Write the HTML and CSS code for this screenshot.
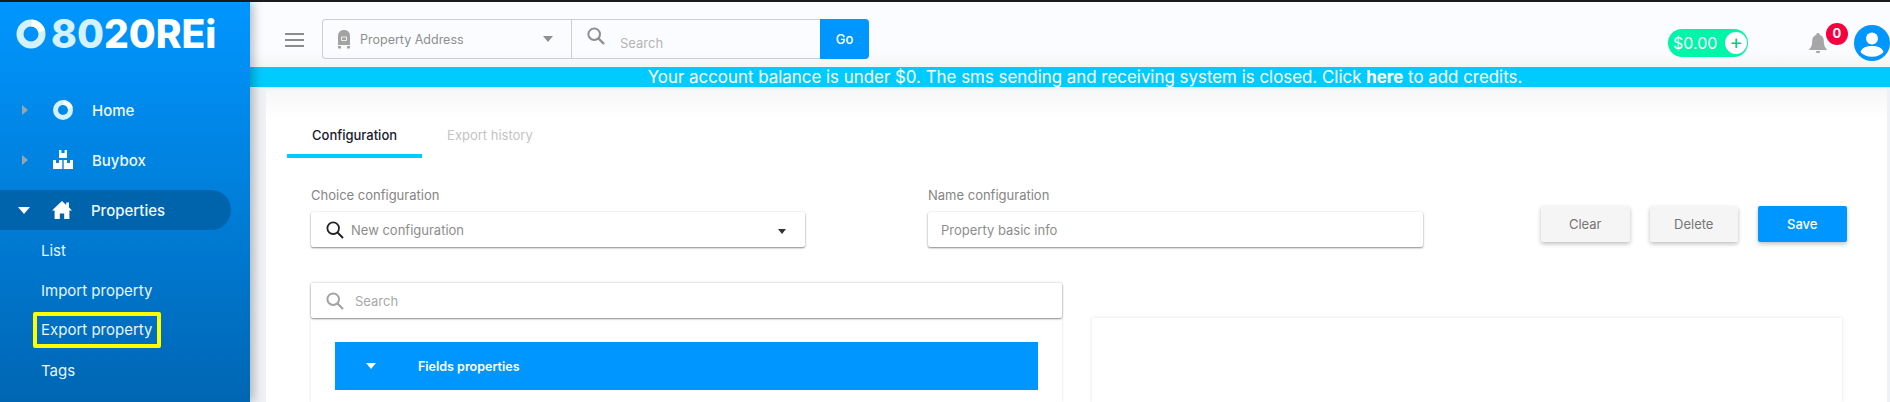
FILE: index.html
```html
<!DOCTYPE html>
<html lang="en">
<head>
    <meta charset="UTF-8">
    <meta name="viewport" content="width=device-width, initial-scale=1.0">
    <title>Export property</title>
    <link rel="stylesheet" href="styles.css">
</head>
<body>
<div class="app">
    <aside class="sidebar">
        <div class="logo">
            <svg class="logo-ring" viewBox="0 0 30 30">
                <circle cx="15" cy="15" r="11" fill="none" stroke="#d4f1ff" stroke-width="7"/>
                <path d="M15.6 4A11 11 0 0 1 25.8 12.6" fill="none" stroke="#fff" stroke-width="7"/>
            </svg>
            <span class="logo-text"><span class="logo-light">80</span>20REi</span>
        </div>
        <ul class="nav">
            <li class="nav-item">
                <span class="arrow-right"></span>
                <svg class="nav-icon" viewBox="0 0 20 20">
                    <circle cx="10" cy="10" r="7.5" fill="none" stroke="#d4f1ff" stroke-width="5"/>
                    <path d="M10.4 2.5A7.5 7.5 0 0 1 17.4 8.4" fill="none" stroke="#fff" stroke-width="5"/>
                </svg>
                <span>Home</span>
            </li>
            <li class="nav-item">
                <span class="arrow-right"></span>
                <svg class="nav-icon" viewBox="0 0 20 20">
                    <path fill="#fff" d="M6 0h2.4v3h3.2V0H14v8H6zM0 10h3v3h3v-3h3.3v9H0zM10.7 10H14v3h3v-3h3v9h-9.3z"/>
                </svg>
                <span>Buybox</span>
            </li>
            <li class="nav-item active">
                <span class="arrow-down"></span>
                <svg class="nav-icon" viewBox="0 0 20 20">
                    <path fill="#fff" d="M10 1 0 10.4h2.6V19h5.2v-5.5h4.4V19h5.2v-8.6H20l-3-2.8V2.6h-2.8v2.4z"/>
                </svg>
                <span>Properties</span>
            </li>
            <li class="sub-item">List</li>
            <li class="sub-item">Import property</li>
            <li class="sub-item"><span class="marked">Export property</span></li>
            <li class="sub-item">Tags</li>
        </ul>
    </aside>

    <div class="main">
        <header class="topbar">
            <div class="burger"><span></span><span></span><span></span></div>
            <div class="search-group">
                <div class="address-select">
                    <svg class="mailbox" viewBox="0 0 14 20">
                        <path fill="#a3a3a3" d="M7 1C3 1 1 3.400 1 7v9h12V7c0-3.600-2-6-6-6zM1 17h3v2.500H1zM10 17h3v2.500h-3z"/>
                        <path fill="none" stroke="#eee" stroke-width="1" d="M4.500 8h5v3.500h-5z"/>
                    </svg>
                    <span class="address-text">Property Address</span>
                    <span class="caret-grey"></span>
                </div>
                <div class="address-search">
                    <svg class="search-icon-top" viewBox="0 0 18 18">
                        <circle cx="7.200" cy="7.200" r="5.800" fill="none" stroke="#8f8f8f" stroke-width="2"/>
                        <path d="m11.500 11.500 5.500 5.500" stroke="#8f8f8f" stroke-width="2.400"/>
                    </svg>
                    <span class="address-search-text">Search</span>
                </div>
                <button class="go-btn">Go</button>
            </div>
            <div class="balance">
                <span class="balance-value">$0.00</span>
                <span class="balance-plus">+</span>
            </div>
            <div class="bell-wrap">
                <svg class="bell" viewBox="0 0 18 21">
                    <path fill="#a6a6a6" d="M9 0a1.600 1.600 0 0 0-1.600 1.800C4.600 2.600 3.200 5 3.200 8c0 4.200-1 6.200-3 8.200V17h17.600v-.8c-2-2-3-4-3-8.200 0-3-1.400-5.400-4.200-6.200A1.600 1.600 0 0 0 9 0zM6.800 18a2.200 2.200 0 0 0 4.400 0z"/>
                </svg>
                <span class="badge">0</span>
            </div>
            <svg class="avatar" viewBox="0 0 36 36">
                <circle cx="18" cy="18" r="18" fill="#0096ff"/>
                <circle cx="18" cy="13.500" r="6" fill="#fff"/>
                <path fill="#fff" d="M6.500 27c1.500-4.500 6-6 11.500-6s10 1.500 11.500 6c-2.500 3-6.500 4.800-11.500 4.800S9 30 6.500 27z"/>
            </svg>
        </header>

        <div class="banner">Your account balance is under $0. The sms sending and receiving system is closed. Click <b>here</b> to add credits.</div>

        <div class="content">
            <div class="card">
                <div class="tabs">
                    <div class="tab tab-active">Configuration</div>
                    <div class="tab">Export history</div>
                </div>

                <div class="form-row">
                    <div class="field field-choice">
                        <label class="field-label">Choice configuration</label>
                        <div class="field-box">
                            <svg class="search-icon" viewBox="0 0 18 18">
                                <circle cx="7.200" cy="7.200" r="5.800" fill="none" stroke="#222" stroke-width="1.800"/>
                                <path d="m11.500 11.500 5.500 5.500" stroke="#222" stroke-width="2"/>
                            </svg>
                            <span class="field-value">New configuration</span>
                            <span class="caret-dark"></span>
                        </div>
                    </div>
                    <div class="field field-name">
                        <label class="field-label">Name configuration</label>
                        <div class="field-box name-box">
                            <span class="field-value">Property basic info</span>
                        </div>
                    </div>
                    <div class="actions">
                        <button class="btn btn-grey">Clear</button>
                        <button class="btn btn-grey">Delete</button>
                        <button class="btn btn-blue">Save</button>
                    </div>
                </div>

                <div class="panels">
                    <div class="panel-left">
                        <div class="field-box panel-search">
                            <svg class="search-icon" viewBox="0 0 18 18">
                                <circle cx="7.200" cy="7.200" r="5.800" fill="none" stroke="#a3a3a3" stroke-width="2"/>
                                <path d="m11.500 11.500 5.500 5.500" stroke="#a3a3a3" stroke-width="2.200"/>
                            </svg>
                            <span class="panel-search-text">Search</span>
                        </div>
                        <div class="panel-body">
                            <div class="accordion">
                                <span class="arrow-down small"></span>
                                <span class="accordion-title">Fields properties</span>
                            </div>
                        </div>
                    </div>
                    <div class="panel-right"></div>
                </div>
            </div>
        </div>
    </div>
</div>
</body>
</html>
```

FILE: styles.css
```css
* {
    box-sizing: border-box;
}
html, body {
    height: 100%;
}
body {
    margin: 0;
    overflow: hidden;
    font-family: Inter, "Open Sans", sans-serif;
    background-color: #eef1f5;
}
.app {
    display: flex;
    height: 100vh;
    border-top: 2px solid #1c1c1c;
}

/* sidebar */
.sidebar {
    width: 250px;
    flex-shrink: 0;
    background: linear-gradient(180deg, #0096ff 0%, #0066b3 100%);
    box-shadow: 3px 0 10px rgba(0,0,0,0.28);
    position: relative;
    z-index: 2;
    color: #eef9ff;
}
.logo {
    display: flex;
    align-items: center;
    height: 83px;
    padding: 0 0 20px 16px;
}
.logo-ring {
    width: 30px;
    height: 30px;
    flex-shrink: 0;
}
.logo-text {
    margin-left: 5px;
    font-size: 39px;
    line-height: 1;
    font-weight: 800;
    color: #fff;
}
.logo-light {
    color: #d4f1ff;
}
.nav {
    list-style: none;
    margin: 0;
    padding: 0;
}
.nav-item {
    display: flex;
    align-items: center;
    height: 50px;
    padding-left: 22px;
    font-size: 15px;
    font-weight: 500;
}
.nav-item.active {
    position: relative;
    z-index: 0;
    height: 45px;
    padding-top: 5px;
}
.nav-item.active::before {
    content: "";
    position: absolute;
    left: 0;
    top: 5px;
    width: 231px;
    height: 40px;
    background-color: #0064ad;
    border-radius: 0 20px 20px 0;
    z-index: -1;
}
.nav-icon {
    width: 20px;
    height: 20px;
    margin-right: 19px;
}
.arrow-right {
    width: 0;
    height: 0;
    margin-right: 25px;
    border-left: 6px solid #9aa4ab;
    border-top: 5.5px solid transparent;
    border-bottom: 5.5px solid transparent;
}
.arrow-down {
    width: 0;
    height: 0;
    margin: 0 22px 0 -4px;
    border-top: 7px solid #fff;
    border-left: 6.500px solid transparent;
    border-right: 6.500px solid transparent;
}
.sub-item {
    display: flex;
    align-items: center;
    height: 40px;
    padding-left: 41px;
    font-size: 15px;
    color: #e6f5ff;
}
.marked {
    margin-left: -8px;
    padding: 5px 4px;
    border: 4px solid #ffff00;
    border-radius: 2px;
    width: 128px;
    height: 36px;
    line-height: 18px;
    white-space: nowrap;
}

/* top bar */
.main {
    flex: 1;
    min-width: 0;
    display: flex;
    flex-direction: column;
}
.topbar {
    display: flex;
    align-items: flex-start;
    height: 65px;
    flex-shrink: 0;
    padding-left: 35px;
    background: linear-gradient(180deg, #fbfcff 0%, #fbfcff 75%, #f3f4f6 100%);
}
.burger {
    width: 19px;
    margin: 27px 18px 0 0;
}
.burger span {
    display: block;
    height: 2px;
    margin: 4px 0;
    background-color: #8c8c8c;
}
.search-group {
    display: flex;
    width: 547px;
    height: 40px;
    margin-top: 17px;
    border: 1px solid #ccced3;
    border-right: none;
    border-radius: 4px;
}
.address-select {
    display: flex;
    align-items: center;
    width: 249px;
    padding-left: 14px;
    border-right: 1px solid #ccced3;
}
.mailbox {
    width: 14px;
    height: 20px;
    margin-right: 9px;
}
.address-text {
    flex: 1;
    font-size: 12.500px;
    color: #8f8f8f;
}
.caret-grey {
    width: 0;
    height: 0;
    margin-right: 18px;
    border-top: 6px solid #8f8f8f;
    border-left: 5px solid transparent;
    border-right: 5px solid transparent;
}
.address-search {
    flex: 1;
    display: flex;
    align-items: center;
    padding-left: 15px;
}
.search-icon-top {
    width: 18px;
    height: 18px;
    margin: 0 15px 6px 0;
}
.address-search-text {
    margin-top: 8px;
    font-size: 13px;
    color: #b5b5b5;
}
.go-btn {
    width: 49px;
    margin: -1px 0;
    border: none;
    border-radius: 0 4px 4px 0;
    background-color: #0096ff;
    color: #fff;
    font-family: inherit;
    font-size: 13px;
    font-weight: 500;
    padding-bottom: 2px;
}
.balance {
    display: flex;
    align-items: center;
    justify-content: space-between;
    width: 80px;
    height: 28px;
    margin: 27px 0 0 799px;
    padding: 0 1px 0 5px;
    border-radius: 14px;
    background-color: #00f5a8;
    color: #fff;
}
.balance-value {
    font-size: 16px;
}
.balance-plus {
    width: 22px;
    height: 22px;
    border-radius: 50%;
    background-color: #fff;
    color: #00c98a;
    font-size: 20px;
    line-height: 20px;
    text-align: center;
}
.bell-wrap {
    position: relative;
    width: 18px;
    height: 21px;
    margin: 31px 0 0 61px;
}
.bell {
    display: block;
    width: 18px;
    height: 21px;
}
.badge {
    position: absolute;
    top: -10px;
    left: 17px;
    width: 22px;
    height: 22px;
    border-radius: 50%;
    background-color: #f7003f;
    color: #fff;
    font-size: 13px;
    font-weight: 700;
    line-height: 21px;
    text-align: center;
}
.avatar {
    width: 36px;
    height: 36px;
    margin: 23px 0 0 27px;
    flex-shrink: 0;
}
.banner {
    height: 20px;
    flex-shrink: 0;
    padding-left: 30px;
    background-color: #00cbff;
    color: #fff;
    font-size: 16.900px;
    line-height: 20px;
    text-align: center;
    white-space: nowrap;
}

/* content */
.content {
    flex: 1;
    min-height: 0;
    padding: 3px 3px 0 16px;
}
.card {
    display: flex;
    flex-direction: column;
    height: 100%;
    padding-left: 21px;
    background: linear-gradient(180deg, #f7f7f8 0, #fff 30px);
}
.tabs {
    display: flex;
    padding-top: 30px;
}
.tab {
    height: 38px;
    padding: 0 25px;
    font-size: 13px;
    line-height: 30px;
    color: #c4c4c4;
}
.tab-active {
    font-weight: 500;
    color: #15202b;
    border-bottom: 4px solid #00cbff;
}
.form-row {
    display: flex;
    margin: 28px 0 0 24px;
}
.field-choice {
    width: 494px;
}
.field-name {
    width: 495px;
    margin-left: 123px;
}
.field-label {
    display: block;
    height: 18px;
    margin-bottom: 8px;
    font-size: 13px;
    line-height: 18px;
    color: #858585;
}
.field-box {
    display: flex;
    align-items: center;
    height: 35px;
    padding-left: 15px;
    background-color: #fff;
    border-radius: 2px;
    box-shadow: 0 1px 2px rgba(0,0,0,0.45), 0 0 3px rgba(0,0,0,0.08);
}
.name-box {
    padding-left: 13px;
}
.search-icon {
    width: 18px;
    height: 18px;
    margin-right: 7px;
}
.field-value {
    flex: 1;
    font-size: 13px;
    color: #8d8d8d;
}
.caret-dark {
    width: 0;
    height: 0;
    margin: 3px 19px 0 0;
    border-top: 5px solid #333;
    border-left: 4.500px solid transparent;
    border-right: 4.500px solid transparent;
}
.actions {
    display: flex;
    gap: 20px;
    margin: 20px 0 0 118px;
}
.btn {
    width: 88.500px;
    height: 36px;
    border: none;
    border-radius: 2px;
    font-family: inherit;
    font-size: 13px;
    box-shadow: 0 2px 4px rgba(0,0,0,0.25);
}
.btn-grey {
    background-color: #f5f5f5;
    color: #757575;
}
.btn-blue {
    background-color: #0096ff;
    color: #fff;
    font-weight: 500;
}
.panels {
    flex: 1;
    min-height: 0;
    display: flex;
    gap: 30px;
    margin: 36px 0 0 24px;
}
.panel-left {
    width: 751px;
    box-shadow: 0 0 3px rgba(0,0,0,0.12);
}
.panel-search {
    padding-left: 15px;
}
.panel-search-text {
    margin-left: 4px;
    font-size: 13px;
    color: #a8a8a8;
}
.panel-body {
    padding: 24px;
}
.accordion {
    display: flex;
    align-items: center;
    width: 703px;
    height: 48px;
    padding-left: 31px;
    background-color: #0096ff;
    color: #fff;
}
.arrow-down.small {
    margin: 0 42px 0 0;
    border-top-width: 6px;
    border-left-width: 5px;
    border-right-width: 5px;
}
.accordion-title {
    font-size: 12.500px;
    font-weight: 600;
}
.panel-right {
    width: 750px;
    margin-top: 35px;
    background-color: #fff;
    box-shadow: 0 0 4px rgba(0,0,0,0.12);
}
```
